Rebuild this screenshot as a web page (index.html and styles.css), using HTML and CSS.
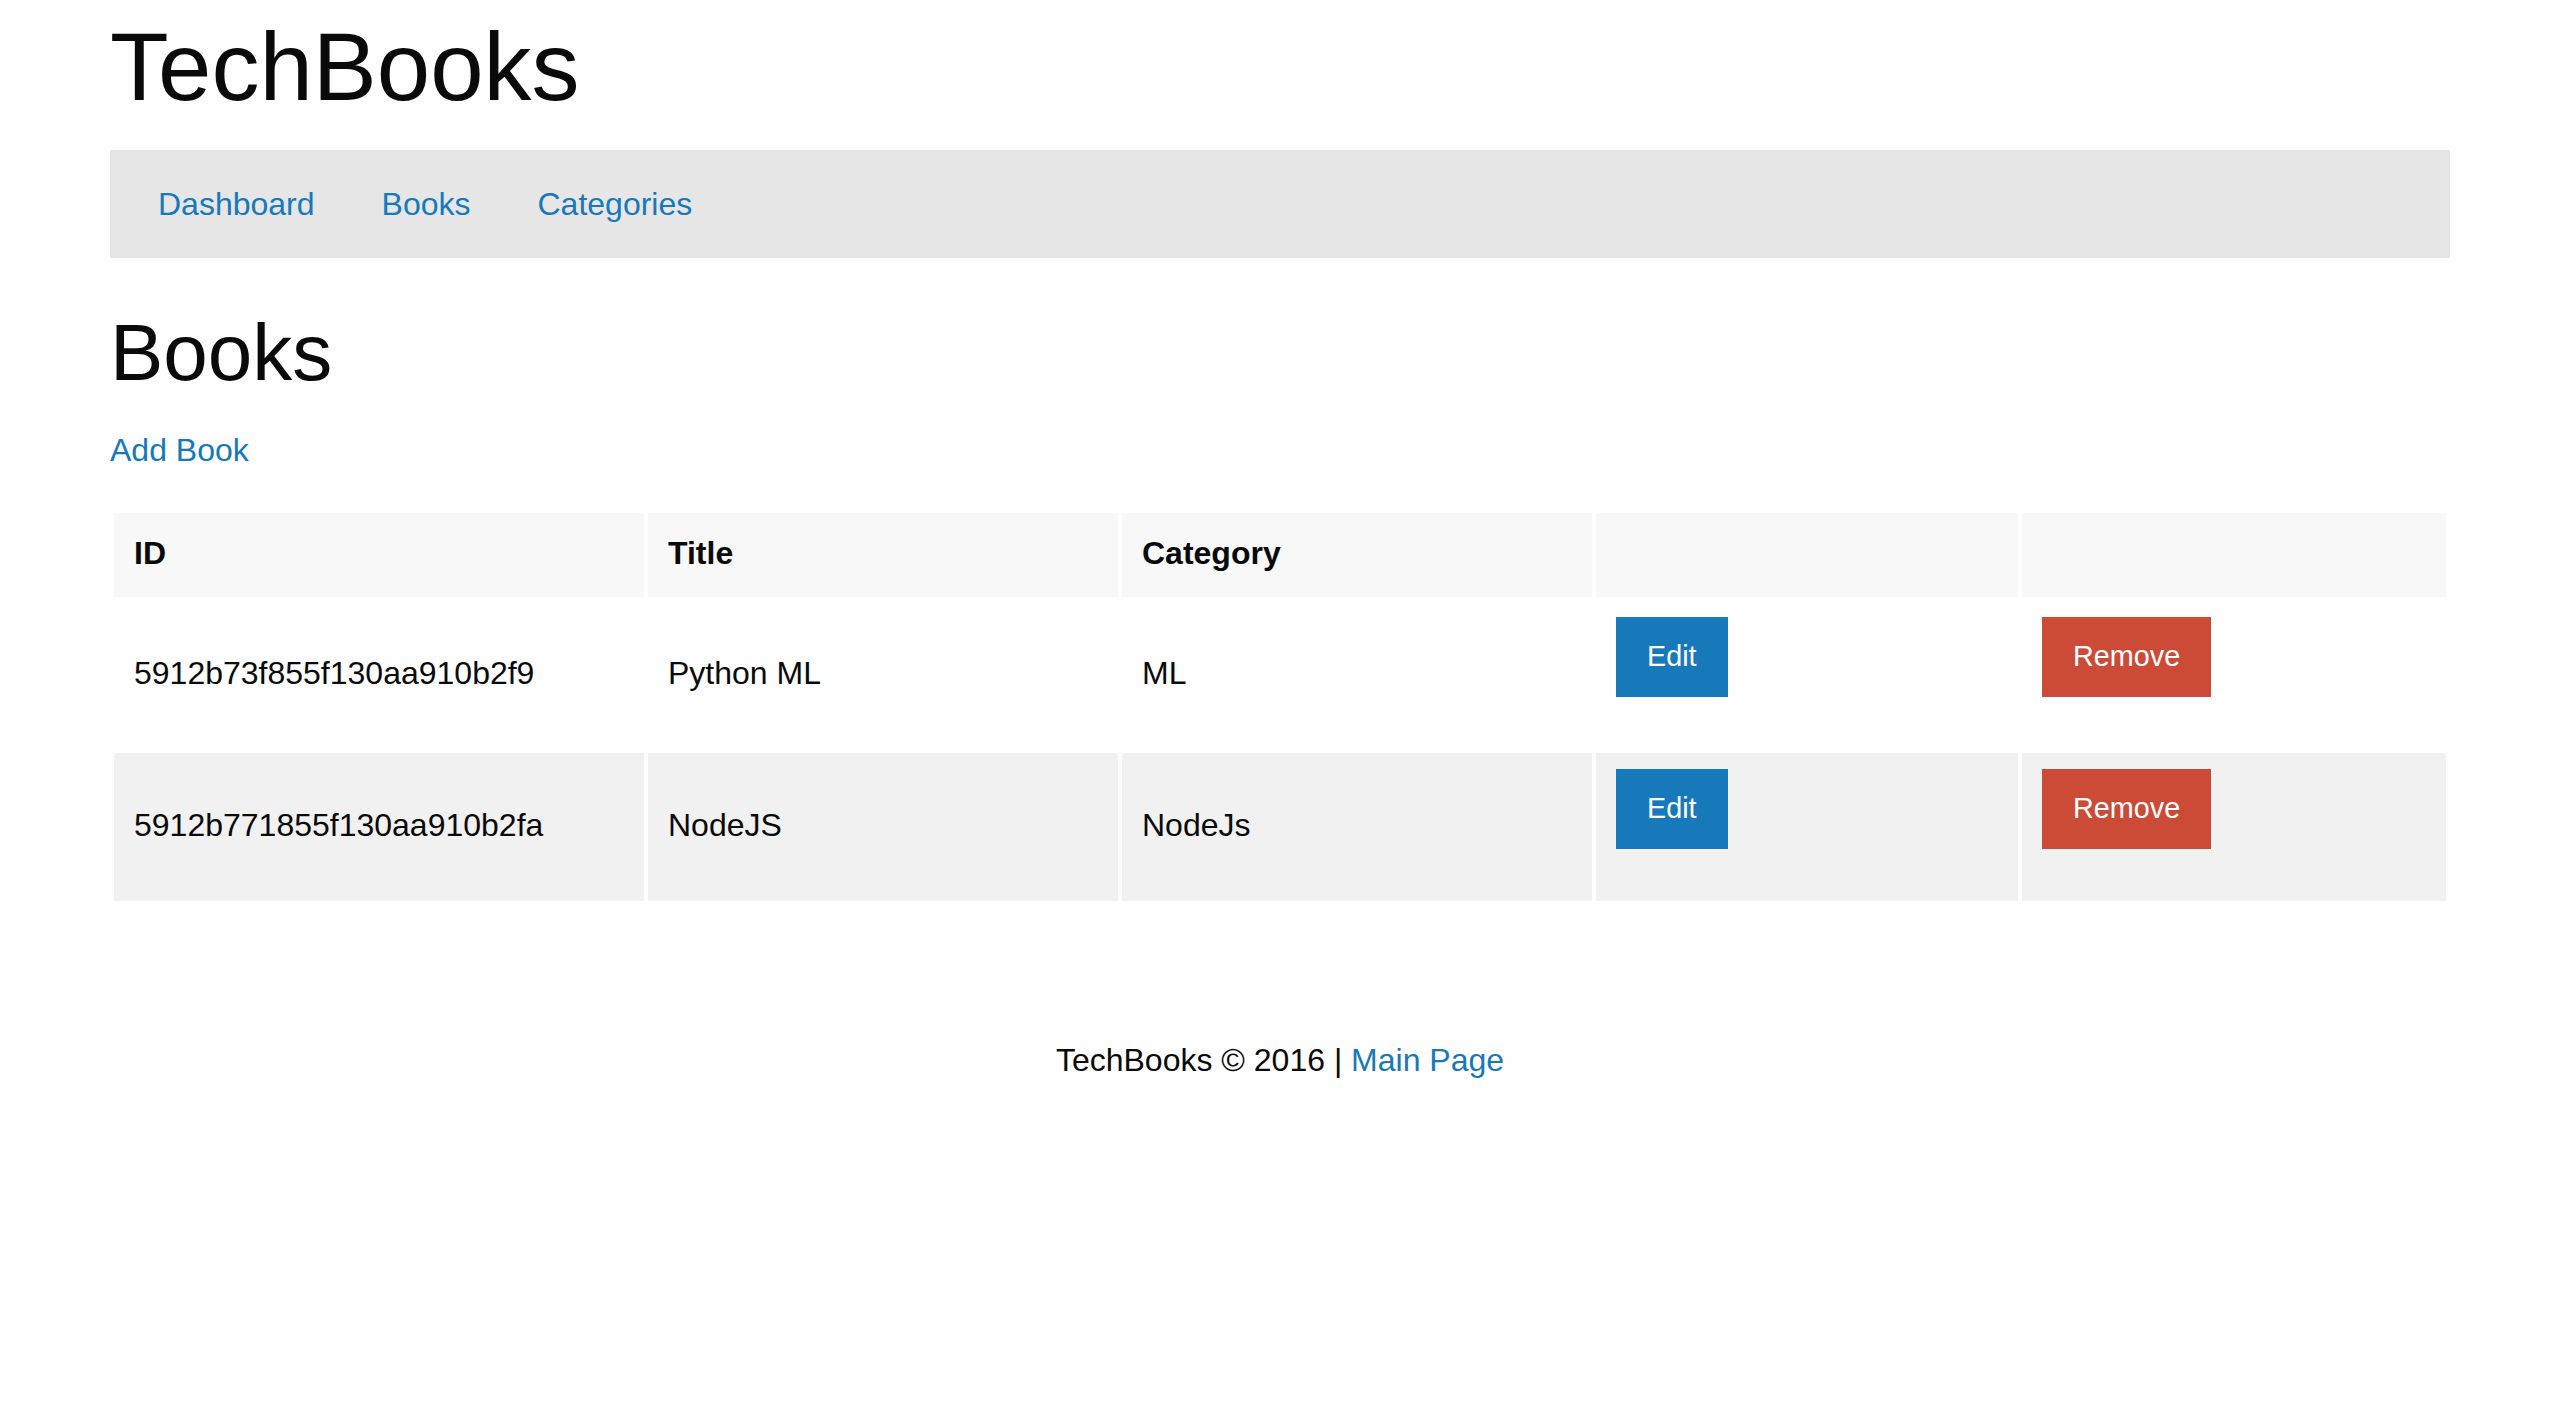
FILE: index.html
```html
<!DOCTYPE html>
<html lang="en">
<head>
<meta charset="utf-8">
<title>TechBooks</title>
<link rel="stylesheet" href="styles.css">
</head>
<body>
<div class="container">
  <h1 class="site-title">TechBooks</h1>
  <nav class="top-bar">
    <ul class="menu">
      <li><a href="#">Dashboard</a></li>
      <li><a href="#">Books</a></li>
      <li><a href="#">Categories</a></li>
    </ul>
  </nav>
  <main class="content">
    <h2 class="page-title">Books</h2>
    <p class="actions"><a href="#">Add Book</a></p>
    <table class="books">
      <thead>
        <tr>
          <th class="col-id">ID</th>
          <th class="col-title">Title</th>
          <th class="col-cat">Category</th>
          <th class="col-edit"></th>
          <th class="col-remove"></th>
        </tr>
      </thead>
      <tbody>
        <tr>
          <td>5912b73f855f130aa910b2f9</td>
          <td>Python ML</td>
          <td>ML</td>
          <td><a class="button" href="#">Edit</a></td>
          <td><a class="button alert" href="#">Remove</a></td>
        </tr>
        <tr>
          <td>5912b771855f130aa910b2fa</td>
          <td>NodeJS</td>
          <td>NodeJs</td>
          <td><a class="button" href="#">Edit</a></td>
          <td><a class="button alert" href="#">Remove</a></td>
        </tr>
      </tbody>
    </table>
  </main>
  <footer class="site-footer">
    <p>TechBooks © 2016 | <a href="#">Main Page</a></p>
  </footer>
</div>
</body>
</html>
```
FILE: styles.css
```css
* { box-sizing: border-box; }

html, body {
  margin: 0;
  padding: 0;
  background: #fefefe;
}

body {
  font-family: "Liberation Sans", Arial, Helvetica, sans-serif;
  font-size: 32px;
  line-height: 1.5;
  color: #0a0a0a;
}

a {
  color: #1779ba;
  text-decoration: none;
}

.container {
  width: 2340px;
  margin: 0 auto;
}

.site-title {
  margin: 0 0 16px;
  font-size: 96px;
  font-weight: normal;
  line-height: 1.4;
}

.top-bar {
  background: #e6e6e6;
  padding: 16px;
}

.menu {
  display: flex;
  gap: 3px;
  margin: 0;
  padding: 0;
  list-style: none;
}

.menu a {
  display: block;
  padding: 22px 32px;
  line-height: 1;
  font-size: 32px;
}

.content {
  padding-top: 39px;
}

.page-title {
  margin: 0 0 16px;
  font-size: 80px;
  font-weight: normal;
  line-height: 1.4;
}

.actions {
  margin: 0 0 32px;
  line-height: 1.6;
}

.books {
  width: 100%;
  table-layout: fixed;
  border-collapse: separate;
  border-spacing: 4px;
  margin: 0 0 32px;
}

.books th,
.books td {
  padding: 16px 20px 20px;
  text-align: left;
  line-height: 1.5;
}

.books th {
  background: #f8f8f8;
  font-weight: bold;
}

.books tbody tr {
  background: #fefefe;
}

.books tbody tr:nth-child(even) {
  background: #f1f1f1;
}

.col-id { width: 530px; }
.col-title { width: 470px; }
.col-cat { width: 470px; }
.col-edit { width: 422px; }
.col-remove { width: 424px; }

.button {
  display: inline-block;
  margin: 0 0 32px;
  padding: 25.6px 31px;
  font-size: 28.8px;
  line-height: 1;
  color: #fefefe;
  background: #1779ba;
}

.button.alert {
  background: #cc4b37;
}

.site-footer {
  padding-top: 98px;
  text-align: center;
}

.site-footer p {
  margin: 0;
  line-height: 1.6;
}
```
